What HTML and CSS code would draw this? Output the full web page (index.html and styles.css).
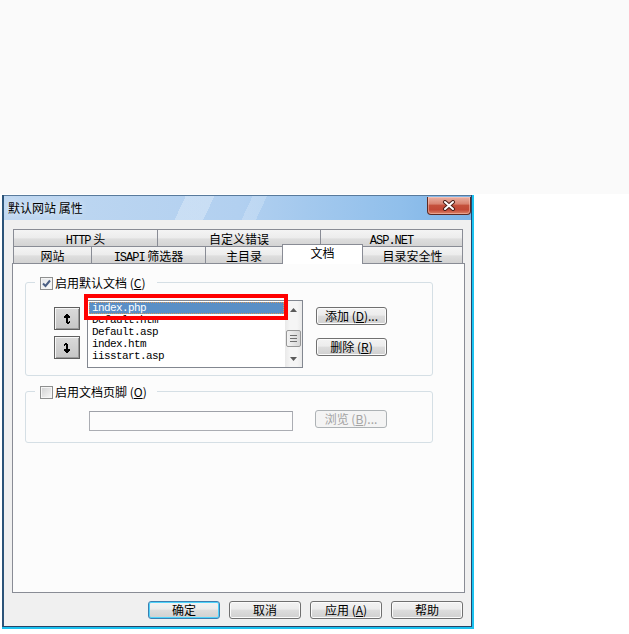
FILE: index.html
```html
<!DOCTYPE html>
<html lang="zh-CN">
<head>
<meta charset="utf-8">
<title>默认网站 属性</title>
<link rel="stylesheet" href="styles.css">
</head>
<body>
<div class="topband"></div>
<div class="window">
  <div class="titlebar">
    <span class="title">默认网站 属性</span>
    <button class="close" aria-label="关闭">
      <svg width="14" height="11" viewBox="0 0 14 11"><path d="M3 2L11 9M11 2L3 9" stroke="#4a2019" stroke-width="4" stroke-linecap="round"/><path d="M3 2L11 9M11 2L3 9" stroke="#ffffff" stroke-width="2" stroke-linecap="round"/></svg>
    </button>
  </div>
  <div class="client">
    <div class="tabs">
      <div class="tabrow">
        <div class="tab t-http"><span class="lat">HTTP</span> 头</div>
        <div class="tab t-err">自定义错误</div>
        <div class="tab t-asp"><span class="lat">ASP.NET</span></div>
      </div>
      <div class="tabrow">
        <div class="tab t-site">网站</div>
        <div class="tab t-isapi"><span class="lat">ISAPI</span> 筛选器</div>
        <div class="tab t-home">主目录</div>
        <div class="tab t-doc sel">文档</div>
        <div class="tab t-sec">目录安全性</div>
      </div>
    </div>
    <div class="panel">
      <div class="group g1">
        <div class="legend">
          <span class="check"><svg width="11" height="11" viewBox="0 0 11 11"><path d="M2 5.5L4.5 8L9 2.5" fill="none" stroke="#4b5f84" stroke-width="2"/></svg></span>
          <span>启用默认文档 (<u>C</u>)</span>
        </div>
        <div class="g1-body">
          <div class="arrows">
            <button class="arrowbtn" aria-label="上移">
              <svg class="glyph" width="8" height="10" viewBox="0 0 8 10"><path d="M3 0h2v1h1v1h1v2H5v4h1v-1h1v2H6v1H4V9H3V4H1V2h1V1h1z" fill="#000"/></svg>
            </button>
            <button class="arrowbtn" aria-label="下移">
              <svg class="glyph down" width="8" height="10" viewBox="0 0 8 10"><path d="M3 0h2v1h1v1h1v2H5v4h1v-1h1v2H6v1H4V9H3V4H1V2h1V1h1z" fill="#000"/></svg>
            </button>
          </div>
          <div class="listbox">
            <ul class="items">
              <li class="sel">index.php</li>
              <li>Default.htm</li>
              <li>Default.asp</li>
              <li>index.htm</li>
              <li>iisstart.asp</li>
            </ul>
            <div class="scrollbar">
              <div class="sb-btn"><svg width="7" height="4" viewBox="0 0 7 4"><path d="M0 4L3.5 0L7 4z" fill="#5a5a5a"/></svg></div>
              <div class="sb-track">
                <div class="thumb"><i></i><i></i><i></i></div>
              </div>
              <div class="sb-btn"><svg width="7" height="4" viewBox="0 0 7 4"><path d="M0 0L7 0L3.5 4z" fill="#5a5a5a"/></svg></div>
            </div>
            <div class="annot"></div>
          </div>
          <div class="sidebtns">
            <button class="btn w71">添加 (<u>D</u>)...</button>
            <button class="btn w71">删除 (<u>R</u>)</button>
          </div>
        </div>
      </div>
      <div class="group g2">
        <div class="legend">
          <span class="check empty"></span>
          <span>启用文档页脚 (<u>O</u>)</span>
        </div>
        <div class="g2-body">
          <div class="textbox"></div>
          <button class="btn disabled w72" disabled>浏览 (<u>B</u>)...</button>
        </div>
      </div>
    </div>
    <div class="footer">
      <button class="btn default w72">确定</button>
      <button class="btn w72">取消</button>
      <button class="btn w72">应用 (<u>A</u>)</button>
      <button class="btn w72">帮助</button>
    </div>
  </div>
</div>
</body>
</html>
```

FILE: styles.css
```css
* { box-sizing: border-box; }
html, body { margin: 0; padding: 0; }
body {
  width: 629px;
  height: 634px;
  background: #ffffff;
  font-family: "Noto Sans CJK SC", "Liberation Sans", sans-serif;
  font-size: 12px;
  color: #000;
  position: relative;
  overflow: hidden;
}
u { text-decoration: underline; }
button { font-family: inherit; font-size: 12px; color: #000; cursor: default; }

.topband { height: 194px; background: #fafafa; }

.window {
  position: absolute;
  left: 2px;
  top: 195px;
  width: 470px;
  height: 432px;
  border-left: 2px solid #2c5479;
  border-right: 1px solid #24456a;
  border-bottom: 1px solid #24456a;
  box-shadow: 2px 0 0 #1cc2f0, 0 2px 0 #1cc2f0, 2px 2px 0 #1cc2f0;
  background: #f0f0f0;
  display: flex;
  flex-direction: column;
}

.titlebar {
  height: 25px;
  flex: none;
  border-top: 1px solid #587a9c;
  padding-left: 4px;
  display: flex;
  justify-content: space-between;
  align-items: flex-start;
  background:
    linear-gradient(115deg, rgba(255,255,255,0) 0 38%, rgba(255,255,255,0.28) 38% 44%, rgba(255,255,255,0) 44% 52%, rgba(255,255,255,0.2) 52% 55%, rgba(255,255,255,0) 55%),
    linear-gradient(to right, #c0d8f1 0%, #b2d0f0 50%, #90bfeb 85%, #7db3e6 100%);
}
.title { line-height: 24px; text-shadow: 0 0 6px rgba(255,255,255,0.9); }
.close {
  width: 44px;
  height: 18px;
  margin-top: 1px;
  padding: 0;
  border: 1px solid #5e2a22;
  border-top: none;
  border-radius: 0 0 4px 4px;
  background: linear-gradient(#eab0a2 0%, #d98472 40%, #c4503c 50%, #c24836 75%, #dc8468 100%);
  box-shadow: inset 0 0 0 1px rgba(255,210,200,0.45);
  display: flex;
  align-items: center;
  justify-content: center;
}

.client {
  flex: 1;
  padding: 9px 0 7px 8px;
  display: flex;
  flex-direction: column;
}

.tabs { margin-left: 1px; height: 34px; flex: none; }
.tabrow { display: flex; height: 17px; align-items: flex-start; }
.tab {
  height: 17px;
  border: 1px solid #898c95;
  border-bottom: none;
  margin-left: -1px;
  background: linear-gradient(#f4f4f4 0%, #ececec 50%, #dedede 55%, #d3d3d3 100%);
  text-align: center;
  line-height: 18px;
  white-space: nowrap;
  flex: none;
}
.tab:first-child { margin-left: 0; }
.tab.sel {
  background: #ffffff;
  height: 20px;
  margin-top: -2px;
  line-height: 16px;
  position: relative;
  z-index: 2;
}
.lat {
  font-family: "Liberation Mono", monospace;
  font-size: 12px;
  letter-spacing: -1px;
}
.t-http { width: 145px; }
.t-err { width: 164px; }
.t-asp { width: 143px; }
.t-site { width: 79px; }
.t-isapi { width: 115px; }
.t-home { width: 78px; }
.t-doc { width: 81px; }
.t-sec { width: 101px; }

.panel {
  flex: none;
  width: 453px;
  height: 330px;
  border: 1px solid #898c95;
  background: #fcfcfc;
  padding: 18px 0 0 12px;
}

.group {
  position: relative;
  width: 408px;
  border: 1px solid #d5dfe5;
  border-radius: 3px;
}
.g1 { height: 94px; }
.g2 { height: 52px; margin-top: 15px; }

.legend {
  position: absolute;
  left: 9px;
  top: -7px;
  width: 122px;
  height: 14px;
  padding-left: 5px;
  display: flex;
  align-items: center;
  gap: 2px;
  background: #fcfcfc;
  line-height: 14px;
  white-space: nowrap;
}
.check {
  width: 13px;
  height: 13px;
  flex: none;
  border: 1px solid #8e8f8f;
  background: linear-gradient(135deg, #e2e4e6, #fdfdfd);
  box-shadow: inset 0 0 0 1px #f4f4f4;
  display: flex;
}
.check.empty {
  background: linear-gradient(135deg, #cfd0d1 0%, #e9e9e9 60%, #fafafa 100%);
  box-shadow: inset 0 0 0 1px #f6f6f6;
}

.g1-body {
  display: flex;
  align-items: flex-start;
  padding: 17px 0 0 28px;
}
.arrows {
  width: 26px;
  margin-top: 7px;
  display: flex;
  flex-direction: column;
  gap: 6px;
}
.arrowbtn {
  width: 26px;
  height: 23px;
  padding: 0;
  border: 1px solid #5f5f5f;
  background: linear-gradient(#dadada, #c6c6c6);
  box-shadow: inset 1px 1px 0 #f6f6f6, inset -1px -1px 0 #9a9a9a;
  display: flex;
  align-items: center;
  justify-content: center;
}
.glyph.down { transform: rotate(180deg); }

.listbox {
  margin-left: 7px;
  width: 216px;
  height: 68px;
  border: 1px solid #828790;
  background: #ffffff;
  display: flex;
  position: relative;
}
.items {
  flex: 1;
  list-style: none;
  margin: 0;
  padding: 1px;
}
.items li {
  height: 12px;
  line-height: 12px;
  padding-left: 3px;
  font-family: "Liberation Mono", monospace;
  font-size: 11px;
  letter-spacing: -0.6px;
  white-space: nowrap;
}
.items li.sel {
  background: #5a8fc6;
  color: #ffffff;
  outline: 1px dotted #d9975a;
  outline-offset: -1px;
}
.scrollbar {
  width: 17px;
  flex: none;
  display: flex;
  flex-direction: column;
  background: linear-gradient(to right, #e9e9e9, #f5f5f5 30%, #f5f5f5 70%, #eaeaea);
}
.sb-btn {
  height: 17px;
  flex: none;
  display: flex;
  align-items: center;
  justify-content: center;
}
.sb-track { flex: 1; padding: 12px 1px 0 1px; }
.thumb {
  height: 17px;
  border: 1px solid #979797;
  border-radius: 2px;
  background: linear-gradient(to right, #f3f3f3, #e2e2e2 60%, #d6d6d6);
  display: flex;
  flex-direction: column;
  align-items: center;
  justify-content: center;
  gap: 2px;
}
.thumb i { display: block; width: 7px; height: 1px; background: #6f6f6f; }
.annot {
  position: absolute;
  left: -4px;
  top: -7px;
  width: 204px;
  height: 26px;
  border: 4px solid #ff0000;
  z-index: 3;
}

.sidebtns {
  margin-left: 13px;
  margin-top: 7px;
  display: flex;
  flex-direction: column;
  gap: 13px;
}

.btn {
  height: 18px;
  padding: 0;
  border: 1px solid #707070;
  border-radius: 3px;
  background: linear-gradient(#f3f3f3 0%, #ececec 45%, #dddddd 50%, #d0d0d0 100%);
  box-shadow: inset 0 0 0 1px #fbfbfb;
  line-height: 16px;
  text-align: center;
  white-space: nowrap;
  flex: none;
}
.w71 { width: 71px; }
.w72 { width: 72px; }
.btn.disabled {
  border-color: #adb2b5;
  background: #f4f4f4;
  box-shadow: none;
  color: #a3a3a3;
}
.btn.default {
  border-color: #3c7fb1;
  box-shadow: inset 0 0 0 1px #4fd3fb;
}

.g2-body {
  display: flex;
  align-items: flex-start;
  padding: 18px 0 0 63px;
}
.textbox {
  width: 204px;
  height: 20px;
  margin-top: 1px;
  border: 1px solid #abadb3;
  border-top-color: #9ea1a8;
  background: #fcfcfc;
}
.g2-body .btn { margin-left: 22px; }

.footer {
  margin-top: 8px;
  display: flex;
  justify-content: flex-end;
  gap: 9px;
  padding-right: 8px;
}
```
